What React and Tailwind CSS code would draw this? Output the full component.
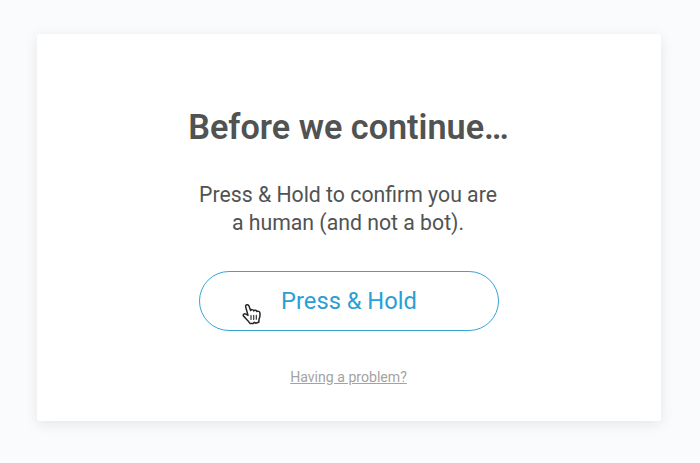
function HandCursor() {
  return (
    <svg
      className="pointer-events-none absolute left-[42px] top-[31px] h-[22px] w-[20px]"
      viewBox="0 0 20 22"
      fill="white"
      stroke="#252525"
      strokeWidth="1.5"
      strokeLinecap="round"
      strokeLinejoin="round"
    >
      <path d="M6 12.4 3.7 4c-.6-2.4 2.5-3.2 3.3-.9l1.6 4.5c.4-1.4 2.8-1.3 3.2.3.7-1.1 2.7-.8 3.1.6.9-.7 2.8-.1 3 1.3.3 2.3.1 4.2-.8 6.2l-.4 3.3-3 .9-1.3-.9-1.4 1.3-3-.1C6.7 18 4 15.9 1.5 13.1c-1-1.6 1-2.9 2.5-1.9z" />
      <path d="M9 12.4v4M11.7 12.4v4M14.3 12.2v4" strokeWidth="1.1" />
    </svg>
  );
}

export default function App() {
  return (
    <div className="flex h-[463px] w-[700px] items-start overflow-hidden bg-[#fafbfd] pl-[37px] pt-[34px] font-[Roboto,sans-serif] text-[#515353]">
      <main className="flex h-[387px] w-[624px] flex-col items-center rounded-[3px] bg-white pt-[73px] shadow-[0_3px_14px_rgba(0,0,0,0.09)]">
        <h1 className="whitespace-nowrap pr-px text-[34.2px] font-semibold leading-[41px]">
          Before we continue…
        </h1>

        <p className="mt-[33px] whitespace-nowrap pr-[2px] text-center text-[21.25px] leading-[28px]">
          Press &amp; Hold to confirm you are
          <br />a human (and not a bot).
        </p>

        <button
          type="button"
          className="relative mt-[34px] h-[60px] w-[300px] rounded-full border border-[#35a4d6] bg-white pt-[2px] text-[23.7px] text-[#2a9fd4]"
        >
          Press &amp; Hold
          <HandCursor />
        </button>

        <a href="#" className="mt-[37px] pr-px text-[14.1px] leading-[18px] text-[#a3a3a3] underline">
          Having a problem?
        </a>
      </main>
    </div>
  );
}
